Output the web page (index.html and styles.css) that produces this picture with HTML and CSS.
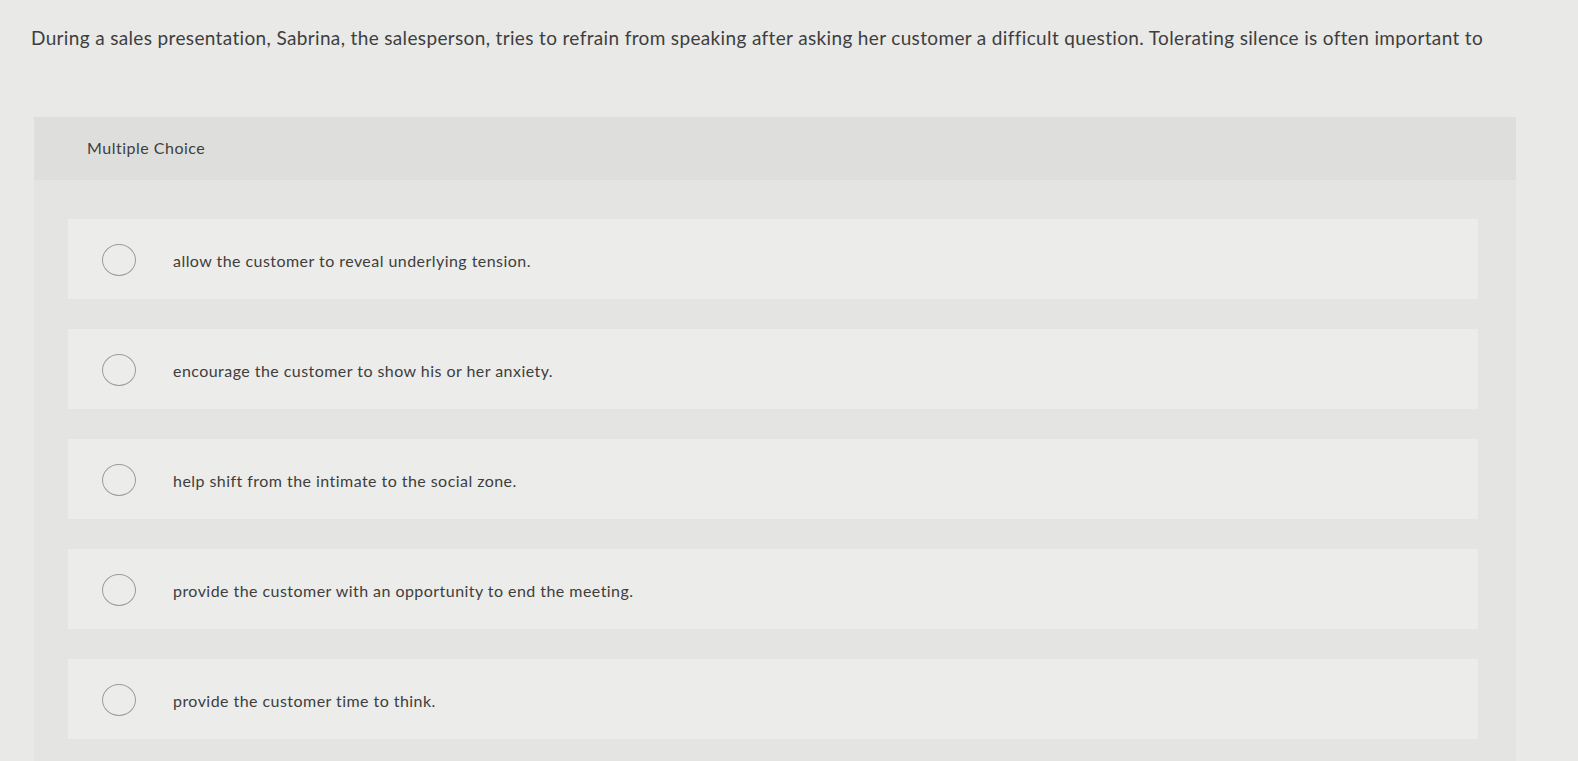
FILE: index.html
```html
<!DOCTYPE html>
<html lang="en">
<head>
<meta charset="utf-8">
<title>Multiple Choice</title>
<link rel="stylesheet" href="styles.css">
</head>
<body>
<p class="question">During a sales presentation, Sabrina, the salesperson, tries to refrain from speaking after asking her customer a difficult question. Tolerating silence is often important to</p>
<section class="panel">
  <div class="panel-header">Multiple Choice</div>
  <div class="options">
    <label class="option"><span class="radio"></span><span class="option-text">allow the customer to reveal underlying tension.</span></label>
    <label class="option"><span class="radio"></span><span class="option-text">encourage the customer to show his or her anxiety.</span></label>
    <label class="option"><span class="radio"></span><span class="option-text">help shift from the intimate to the social zone.</span></label>
    <label class="option"><span class="radio"></span><span class="option-text">provide the customer with an opportunity to end the meeting.</span></label>
    <label class="option"><span class="radio"></span><span class="option-text">provide the customer time to think.</span></label>
  </div>
</section>
</body>
</html>
```
FILE: styles.css
```css
html, body {
  margin: 0;
  padding: 0;
}
body {
  background: #e9e9e7;
  font-family: Lato, "Open Sans", "Liberation Sans", sans-serif;
  color: #3e3e3e;
  width: 1578px;
  height: 761px;
  overflow: hidden;
}
.question {
  margin: 0;
  padding: 25px 0 0 31px;
  font-size: 19px;
  letter-spacing: 0.35px;
  line-height: 26px;
  white-space: nowrap;
}
.panel {
  margin: 66px 0 0 34px;
  width: 1482px;
  background: #e4e4e2;
  padding-bottom: 40px;
}
.panel-header {
  height: 63px;
  background: #dededc;
  display: flex;
  align-items: center;
  padding: 0 0 3px 53px;
  box-sizing: border-box;
  font-size: 16px;
  letter-spacing: 0.5px;
}
.options {
  display: flex;
  flex-direction: column;
  gap: 30px;
  padding: 39px 38px 0 34px;
}
.option {
  height: 80px;
  background: #ececea;
  display: flex;
  align-items: center;
  padding-top: 2px;
  box-sizing: border-box;
}
.radio {
  width: 34px;
  height: 32px;
  border: 1.5px solid #9a9a98;
  border-radius: 50%;
  margin-left: 34px;
  margin-right: 37px;
  box-sizing: border-box;
  flex: none;
}
.option-text {
  font-size: 16px;
  letter-spacing: 0.45px;
}
```
